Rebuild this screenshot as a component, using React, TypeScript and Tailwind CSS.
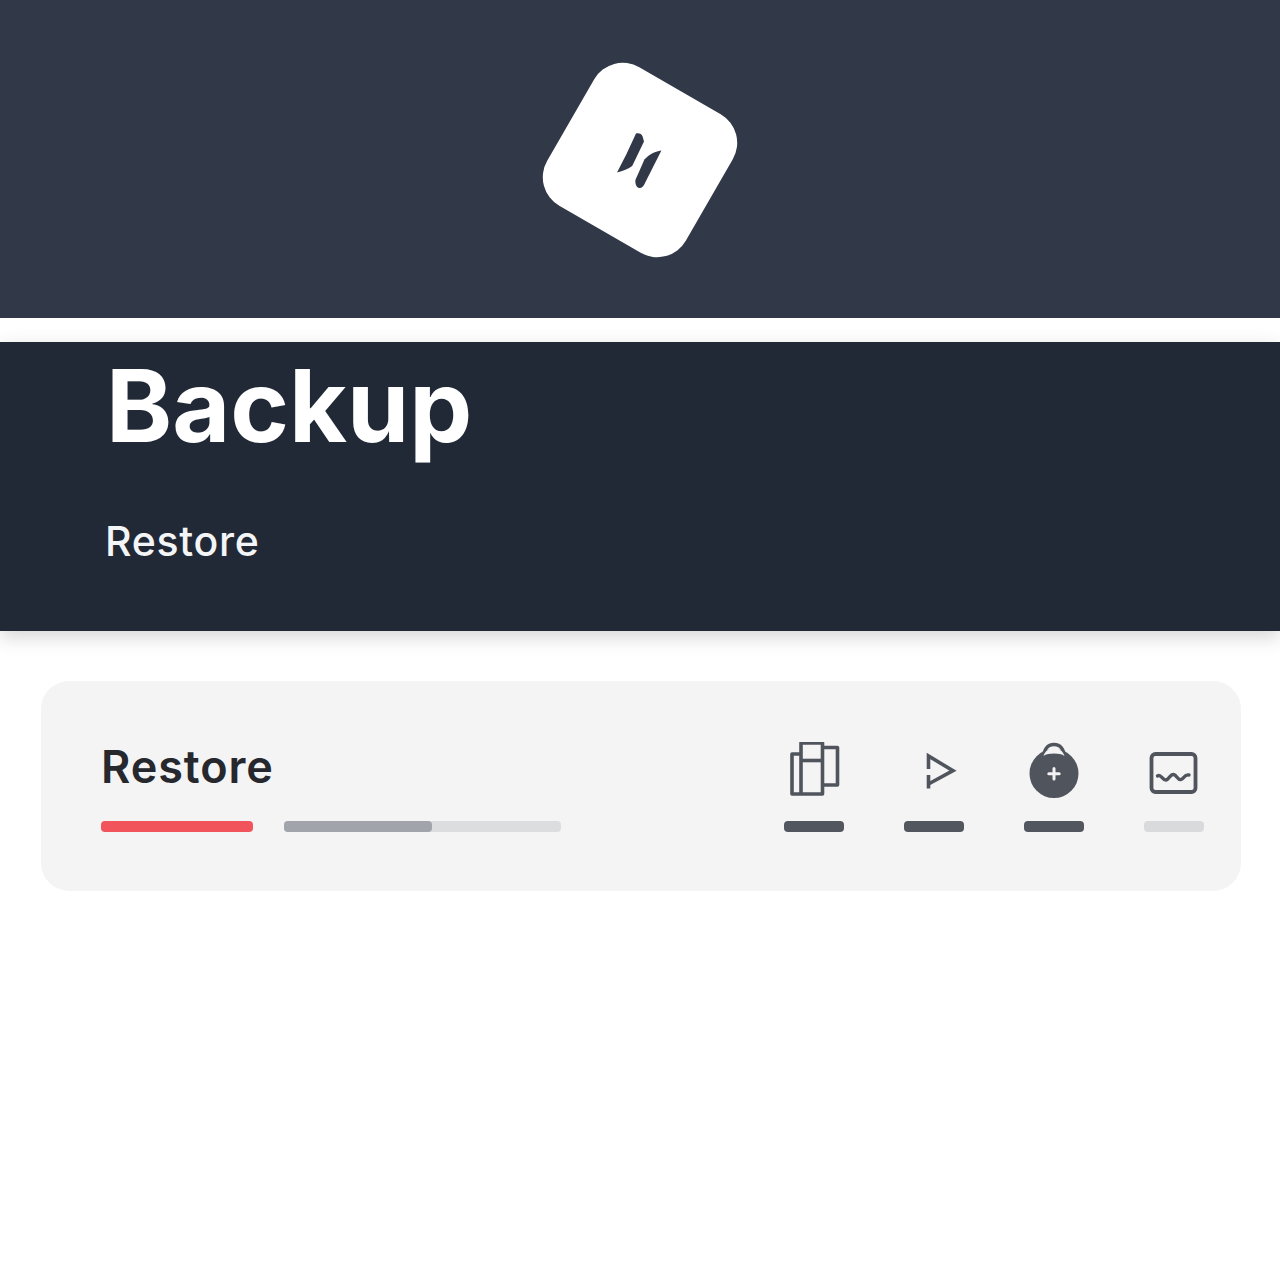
import { FC } from 'react'

const ICON_COLOR = '#50555d'

const LogoMark: FC = () => (
  <svg width="240" height="240" viewBox="0 0 240 240" className="block">
    <rect x="40" y="40" width="160" height="160" rx="33" fill="#ffffff" transform="rotate(30 120 120)" />
    <path
      d="M116 93.6C119 92.8 121.6 94 122.6 96.4L124 101.5L112.2 126C108.5 128.6 103 131.4 97 132.4L106 115Z"
      fill="#313948"
    />
    <path
      d="M141.4 110.4C134 111.8 129.4 114 124.4 119.6L115.4 140C115 144.2 116.6 148 119.5 147.9C122 147.8 123 146.4 124 144.9L135.6 121.9Z"
      fill="#313948"
    />
  </svg>
)

const PanelsIcon: FC = () => (
  <svg width="60" height="60" viewBox="0 0 60 60" fill="none" stroke={ICON_COLOR} strokeWidth="3.6" strokeLinejoin="round">
    <path d="M17 12H8V52H38.5V1H17V52" />
    <path d="M17 18.5H38.5" />
    <path d="M38.5 5.5H53.5V43H38.5" />
  </svg>
)

const PlayIcon: FC = () => (
  <svg width="60" height="60" viewBox="0 0 60 60" fill="none" stroke={ICON_COLOR} strokeWidth="3.6" strokeLinejoin="miter">
    <path d="M24.5 27V14L49 28.7L24.5 42" />
    <path d="M24.5 33V46.5" />
  </svg>
)

const BadgeIcon: FC = () => (
  <svg width="60" height="60" viewBox="0 0 60 60" fill="none">
    <path d="M19.5 17C19.5 7 24 2.5 30 2.5S40.5 7 40.5 17" stroke={ICON_COLOR} strokeWidth="3.6" />
    <circle cx="30" cy="31.5" r="24.5" fill={ICON_COLOR} />
    <path d="M19.5 14C21 9 25 6 30 6S39 9 40.5 14C36 10.8 24 10.8 19.5 14Z" fill="#f4f4f5" />
    <path d="M30 26.5V37M24.8 31.8H35.2" stroke="#f4f4f5" strokeWidth="3" strokeLinecap="round" />
  </svg>
)

const ChartIcon: FC = () => (
  <svg width="60" height="60" viewBox="0 0 60 60" fill="none" stroke={ICON_COLOR} strokeLinecap="round">
    <rect x="7.5" y="12" width="44" height="38" rx="4" strokeWidth="3.8" />
    <path d="M13.5 34C17 31.5 18.5 38.5 22 38C25.5 37.5 26 32 29.5 32.5C33 33 33.5 38.5 37 37.5C40 36.5 40.5 32 45 33" strokeWidth="3.4" />
  </svg>
)

const tools = [
  { icon: <PanelsIcon />, bar: 'bg-[#52565e]' },
  { icon: <PlayIcon />, bar: 'bg-[#52565e]' },
  { icon: <BadgeIcon />, bar: 'bg-[#52565e]' },
  { icon: <ChartIcon />, bar: 'bg-[#d9dadc]' }
]

export default function App() {
  return (
    <div className="min-h-[1280px] bg-white font-['Inter',sans-serif]">
      <div className="flex h-[318px] items-start justify-center bg-[#313948] pt-[40px]">
        <LogoMark />
      </div>

      <div className="mt-[24px] h-[289px] bg-[#222936] pl-[106px] shadow-[0_6px_18px_rgba(0,0,0,0.17)]">
        <h1 className="pt-[4px] text-[100px] leading-[120px] font-bold text-white">Backup</h1>
        <p className="mt-[51px] -ml-[1px] text-[41px] leading-[48px] font-medium tracking-[0.7px] text-[#f4f5f7]">Restore</p>
      </div>

      <div className="mr-[39px] ml-[41px] mt-[50px] flex h-[210px] items-start justify-between rounded-[28px] bg-[#f4f4f5] pr-[37px] pl-[60px]">
        <div className="flex flex-col">
          <h2 className="mt-[58px] text-[45px] leading-[56px] font-semibold tracking-[0.9px] text-[#26282e]">Restore</h2>
          <div className="mt-[26px] flex gap-[31px]">
            <div className="h-[11px] w-[152px] rounded-[4px] bg-[#f2545b]" />
            <div className="h-[11px] w-[277px] rounded-[4px] bg-[#dcdddf]">
              <div className="h-full w-[148px] rounded-[4px] bg-[#a1a4aa]" />
            </div>
          </div>
        </div>

        <div className="mt-[61px] flex gap-[60px]">
          {tools.map((tool, index) => (
            <div key={index} className="flex w-[60px] flex-col">
              {tool.icon}
              <div className={`mt-[19px] h-[11px] rounded-[4px] ${tool.bar}`} />
            </div>
          ))}
        </div>
      </div>
    </div>
  )
}
